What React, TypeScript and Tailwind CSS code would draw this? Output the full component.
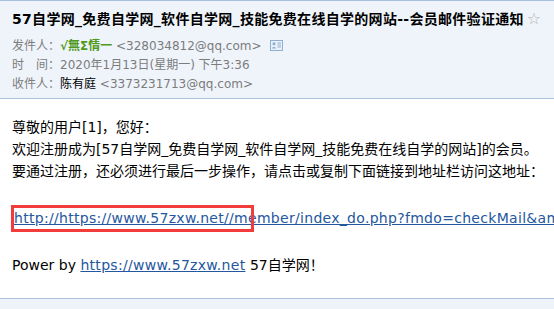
const font = { fontFamily: '"DejaVu Sans", "Noto Sans CJK SC", sans-serif' };

function CardIcon() {
  return (
    <svg width="13" height="11" viewBox="0 0 13 11" className="ml-[8px] inline-block align-[-1px]">
      <rect x="0.5" y="0.5" width="12" height="10" fill="#eaf1f9" stroke="#8fb0d3" />
      <circle cx="4" cy="3.8" r="1.6" fill="#8fb0d3" />
      <path d="M1.8 8.5 C2 6.5 6 6.5 6.2 8.5 Z" fill="#8fb0d3" />
      <path d="M7.5 3h3.5M7.5 5h3.5M7.5 7h3.5" stroke="#8fb0d3" />
    </svg>
  );
}

export default function App() {
  return (
    <div className="w-[554px] h-[309px] overflow-hidden bg-[#eef3fa]" style={font}>
      <div className="border-t border-[#a7c0dd] border-b border-b-[#a9c1dc] bg-[#eff4fb] px-[12px] pt-[7px] pb-[4px]">
        <div className="h-[22px] leading-[22px] text-[14px] font-bold text-black whitespace-nowrap tracking-[0.3px]">
          57自学网_免费自学网_软件自学网_技能免费在线自学的网站--会员邮件验证通知
          <span className="ml-[3px] font-normal text-[16px] text-[#b5b5b5]">☆</span>
        </div>
        <div className="mt-[7px] text-[12px] leading-[19px] text-[#7c7c7c]">
          <div className="whitespace-nowrap">
            发件人：<span className="font-bold text-[#4f9a1c]">√無Σ情一</span> &lt;328034812@qq.com&gt;
            <CardIcon />
          </div>
          <div className="whitespace-nowrap">时　间：2020年1月13日(星期一) 下午3:36</div>
          <div className="whitespace-nowrap">
            收件人：<span className="text-black">陈有庭</span> &lt;3373231713@qq.com&gt;
          </div>
        </div>
      </div>

      <div className="relative bg-white border-b border-[#a9c1dc] px-[12px] pt-[17px] pb-[22px] text-[14px] text-black overflow-hidden">
        <div className="leading-[22px] whitespace-nowrap">尊敬的用户[1]，您好：</div>
        <div className="leading-[22px] whitespace-nowrap">
          欢迎注册成为[57自学网_免费自学网_软件自学网_技能免费在线自学的网站]的会员。
        </div>
        <div className="leading-[22px] whitespace-nowrap">
          要通过注册，还必须进行最后一步操作，请点击或复制下面链接到地址栏访问这地址：
        </div>
        <div className="mt-[25px] leading-[22px] whitespace-nowrap pl-[2px]">
          <a className="underline text-[#24579e] tracking-[0.3px]">
            http://https://www.57zxw.net//member/index_do.php?fmdo=checkMail&amp;amp;mid=1
          </a>
        </div>
        <div className="mt-[25px] leading-[22px] whitespace-nowrap">
          Power by <a className="underline text-[#24579e] tracking-[0.3px]">https://www.57zxw.net</a> 57自学网！
        </div>
        <div className="absolute left-[11px] top-[106px] w-[243px] h-[27px] border-[3px] border-[#f23b3b]" />
      </div>
    </div>
  );
}
